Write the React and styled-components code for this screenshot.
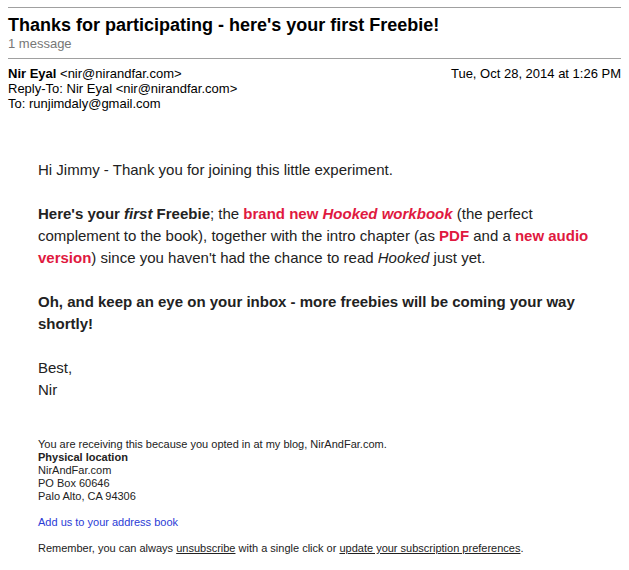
import React from "react";
import styled, { createGlobalStyle } from "styled-components";

const GlobalStyle = createGlobalStyle`
  html, body {
    margin: 0;
    padding: 0;
    background: #fff;
  }
  body {
    font-family: "Liberation Sans", Arial, Helvetica, sans-serif;
    color: #222;
  }
`;

const Page = styled.div`
  padding: 7px 8px 0 8px;
`;

const Rule = styled.hr`
  margin: 0;
  border: 0;
  border-top: 1px solid #a0a0a0;
`;

const Title = styled.h1`
  margin: 6px 0 0 0;
  font-size: 18px;
  line-height: 22px;
  font-weight: bold;
  color: #000;
`;

const Count = styled.div`
  font-size: 13px;
  line-height: 15px;
  color: #777;
  margin-bottom: 7px;
`;

const Header = styled.div`
  margin-top: 7px;
  font-size: 13px;
  line-height: 15px;
  color: #000;
`;

const HeaderRow = styled.div`
  display: flex;
  justify-content: space-between;
`;

const Body = styled.div`
  padding: 48px 16px 0 30px;
  font-size: 15px;
  line-height: 22px;
  color: #222;
`;

const Para = styled.p`
  margin: 0 0 22px 0;
  font-weight: ${(p) => (p.$bold ? "bold" : "normal")};
  &:last-child {
    margin-bottom: 0;
  }
`;

const Red = styled.a`
  color: #e0193f;
  font-weight: bold;
  text-decoration: none;
`;

const Footer = styled.div`
  padding: 37px 0 0 30px;
  font-size: 11px;
  line-height: 13px;
  color: #222;
`;

const FooterBlock = styled.div`
  margin-bottom: 13px;
`;

const Blue = styled.a`
  color: #2a3bd6;
  text-decoration: none;
`;

const Under = styled.a`
  color: #222;
  text-decoration: underline;
`;

export default function App() {
  return (
    <>
      <GlobalStyle />
      <Page>
        <Rule />
        <Title>Thanks for participating - here's your first Freebie!</Title>
        <Count>1 message</Count>
        <Rule />
        <Header>
          <HeaderRow>
            <span>
              <b>Nir Eyal</b> &lt;nir@nirandfar.com&gt;
            </span>
            <span>Tue, Oct 28, 2014 at 1:26 PM</span>
          </HeaderRow>
          <div>Reply-To: Nir Eyal &lt;nir@nirandfar.com&gt;</div>
          <div>To: runjimdaly@gmail.com</div>
        </Header>
        <Body>
          <Para>Hi Jimmy - Thank you for joining this little experiment.</Para>
          <Para>
            <b>
              Here's your <i>first</i> Freebie
            </b>
            ; the{" "}
            <Red href="#">
              brand new <i>Hooked workbook</i>
            </Red>{" "}
            (the perfect complement to the book), together with the intro
            chapter (as <Red href="#">PDF</Red> and a{" "}
            <Red href="#">new audio version</Red>) since you haven't had the
            chance to read <i>Hooked</i> just yet.
          </Para>
          <Para $bold>
            Oh, and keep an eye on your inbox - more freebies will be coming
            your way shortly!
          </Para>
          <Para>
            Best,
            <br />
            Nir
          </Para>
        </Body>
        <Footer>
          <FooterBlock>
            You are receiving this because you opted in at my blog,
            NirAndFar.com.
            <br />
            <b>Physical location</b>
            <br />
            NirAndFar.com
            <br />
            PO Box 60646
            <br />
            Palo Alto, CA 94306
          </FooterBlock>
          <FooterBlock>
            <Blue href="#">Add us to your address book</Blue>
          </FooterBlock>
          <FooterBlock>
            Remember, you can always <Under href="#">unsubscribe</Under> with a
            single click or{" "}
            <Under href="#">update your subscription preferences</Under>.
          </FooterBlock>
        </Footer>
      </Page>
    </>
  );
}
